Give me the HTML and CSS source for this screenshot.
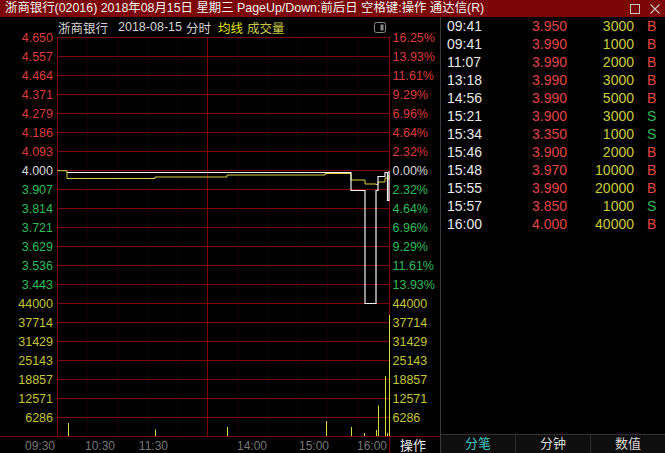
FILE: index.html
```html
<!DOCTYPE html>
<html lang="zh-CN">
<head>
<meta charset="utf-8">
<title>浙商银行 分时</title>
<link rel="stylesheet" href="styles.css">
</head>
<body>
<div class="titlebar">
  <span class="title">浙商银行(02016) 2018年08月15日 星期三 PageUp/Down:前后日 空格键:操作 通达信(R)</span>
  <div class="winbtns">
    <svg class="winbtn" width="12" height="12" viewBox="0 0 12 12"><rect x="1.5" y="1.5" width="9" height="9" fill="none" stroke="#c8c8c8" stroke-width="1"/></svg>
    <svg class="winbtn" width="12" height="12" viewBox="0 0 12 12"><path d="M1.5 1.5 L10.5 10.5 M10.5 1.5 L1.5 10.5" stroke="#c8c8c8" stroke-width="1.1"/></svg>
  </div>
</div>
<div class="main">
  <div class="chartpane">
    <div class="chart-head">
      <span class="h-name">浙商银行</span>
      <span class="h-date">2018-08-15</span>
      <span class="h-mode">分时</span>
      <span class="h-avg">均线</span>
      <span class="h-vol">成交量</span>
      <svg class="h-icon" width="12" height="11" viewBox="0 0 12 11"><rect x="0.5" y="0.5" width="11" height="10" rx="2" fill="none" stroke="#8a8a8a"/><rect x="6.5" y="2.5" width="3" height="6" fill="#8a8a8a"/></svg>
    </div>
    <svg class="chart" width="440" height="416" viewBox="0 37 440 416">
      <g class="grid">
        <line x1="57" y1="37.5" x2="390" y2="37.5"/>
        <line x1="57" y1="56.5" x2="390" y2="56.5"/>
        <line x1="57" y1="75.5" x2="390" y2="75.5"/>
        <line x1="57" y1="94.5" x2="390" y2="94.5"/>
        <line x1="57" y1="113.5" x2="390" y2="113.5"/>
        <line x1="57" y1="132.5" x2="390" y2="132.5"/>
        <line x1="57" y1="151.5" x2="390" y2="151.5"/>
        <line x1="57" y1="170.5" x2="390" y2="170.5"/>
        <line x1="57" y1="189.5" x2="390" y2="189.5"/>
        <line x1="57" y1="208.5" x2="390" y2="208.5"/>
        <line x1="57" y1="227.5" x2="390" y2="227.5"/>
        <line x1="57" y1="246.5" x2="390" y2="246.5"/>
        <line x1="57" y1="265.5" x2="390" y2="265.5"/>
        <line x1="57" y1="284.5" x2="390" y2="284.5"/>
        <line x1="57" y1="303.5" x2="390" y2="303.5"/>
        <line x1="57" y1="322.5" x2="390" y2="322.5"/>
        <line x1="57" y1="341.5" x2="390" y2="341.5"/>
        <line x1="57" y1="360.5" x2="390" y2="360.5"/>
        <line x1="57" y1="379.5" x2="390" y2="379.5"/>
        <line x1="57" y1="398.5" x2="390" y2="398.5"/>
        <line x1="57" y1="417.5" x2="390" y2="417.5"/>
        <line x1="0" y1="436.5" x2="440" y2="436.5"/>
        <line x1="57.5" y1="37" x2="57.5" y2="437"/>
        <line x1="207.5" y1="37" x2="207.5" y2="437"/>
        <line x1="389.5" y1="37" x2="389.5" y2="453"/>
      </g>
      <g class="dots">
        <line x1="87.5" y1="38" x2="87.5" y2="436"/>
        <line x1="117.5" y1="38" x2="117.5" y2="436"/>
        <line x1="147.5" y1="38" x2="147.5" y2="436"/>
        <line x1="177.5" y1="38" x2="177.5" y2="436"/>
        <line x1="237.5" y1="38" x2="237.5" y2="436"/>
        <line x1="267.5" y1="38" x2="267.5" y2="436"/>
        <line x1="297.5" y1="38" x2="297.5" y2="436"/>
        <line x1="327.5" y1="38" x2="327.5" y2="436"/>
        <line x1="357.5" y1="38" x2="357.5" y2="436"/>
      </g>
      <g class="lab-l">
        <text class="up" x="53" y="37.5">4.650</text>
        <text class="up" x="53" y="56.5">4.557</text>
        <text class="up" x="53" y="75.5">4.464</text>
        <text class="up" x="53" y="94.5">4.371</text>
        <text class="up" x="53" y="113.5">4.279</text>
        <text class="up" x="53" y="132.5">4.186</text>
        <text class="up" x="53" y="151.5">4.093</text>
        <text class="flat" x="53" y="170.5">4.000</text>
        <text class="dn" x="53" y="189.5">3.907</text>
        <text class="dn" x="53" y="208.5">3.814</text>
        <text class="dn" x="53" y="227.5">3.721</text>
        <text class="dn" x="53" y="246.5">3.629</text>
        <text class="dn" x="53" y="265.5">3.536</text>
        <text class="dn" x="53" y="284.5">3.443</text>
        <text class="vl" x="53" y="303.5">44000</text>
        <text class="vl" x="53" y="322.5">37714</text>
        <text class="vl" x="53" y="341.5">31429</text>
        <text class="vl" x="53" y="360.5">25143</text>
        <text class="vl" x="53" y="379.5">18857</text>
        <text class="vl" x="53" y="398.5">12571</text>
        <text class="vl" x="53" y="417.5">6286</text>
      </g>
      <g class="lab-r">
        <text class="up" x="392.5" y="37.5">16.25%</text>
        <text class="up" x="392.5" y="56.5">13.93%</text>
        <text class="up" x="392.5" y="75.5">11.61%</text>
        <text class="up" x="392.5" y="94.5">9.29%</text>
        <text class="up" x="392.5" y="113.5">6.96%</text>
        <text class="up" x="392.5" y="132.5">4.64%</text>
        <text class="up" x="392.5" y="151.5">2.32%</text>
        <text class="flat" x="392.5" y="170.5">0.00%</text>
        <text class="dn" x="392.5" y="189.5">2.32%</text>
        <text class="dn" x="392.5" y="208.5">4.64%</text>
        <text class="dn" x="392.5" y="227.5">6.96%</text>
        <text class="dn" x="392.5" y="246.5">9.29%</text>
        <text class="dn" x="392.5" y="265.5">11.61%</text>
        <text class="dn" x="392.5" y="284.5">13.93%</text>
        <text class="vl" x="392.5" y="303.5">44000</text>
        <text class="vl" x="392.5" y="322.5">37714</text>
        <text class="vl" x="392.5" y="341.5">31429</text>
        <text class="vl" x="392.5" y="360.5">25143</text>
        <text class="vl" x="392.5" y="379.5">18857</text>
        <text class="vl" x="392.5" y="398.5">12571</text>
        <text class="vl" x="392.5" y="417.5">6286</text>
      </g>
      <polyline class="avg" points="57,170.7 67,170.7 67,178.5 155,178.5 155,177 227,177 227,175 325,175 325,173.5 351,173.5 351,180 365,180 365,184 376,184 376,184.5 378,184.5 378,182 385,182 385,178 387.5,178 387.5,179 389,179 389,175"/>
      <polyline class="price" points="67,172.5 351,172.5 351,190.5 365,190.5 365,303.5 376,303.5 376,190.5 378,190.5 378,176.5 385,176.5 385,172.5 387.5,172.5 387.5,200.5 389,200.5 389,171"/>
      <g class="bars">
        <line x1="68.5" y1="436" x2="68.5" y2="423"/>
        <line x1="155.5" y1="436" x2="155.5" y2="429.5"/>
        <line x1="227.5" y1="436" x2="227.5" y2="427"/>
        <line x1="326.5" y1="436" x2="326.5" y2="421"/>
        <line x1="351.5" y1="436" x2="351.5" y2="427"/>
        <line x1="364.5" y1="436" x2="364.5" y2="433"/>
        <line x1="376.5" y1="436" x2="376.5" y2="430"/>
        <line x1="378.5" y1="436" x2="378.5" y2="405.5"/>
        <line x1="385.5" y1="436" x2="385.5" y2="376"/>
        <line x1="387.5" y1="436" x2="387.5" y2="433"/>
        <line x1="389.5" y1="436" x2="389.5" y2="315"/>
      </g>
      <g class="times">
        <text x="55" y="445.5">09:30</text>
        <text x="115" y="445.5">10:30</text>
        <text x="168" y="445.5">11:30</text>
        <text x="267" y="445.5">14:00</text>
        <text x="329" y="445.5">15:00</text>
        <text x="387" y="445.5">16:00</text>
      </g>
      <text class="op" x="400" y="445.5">操作</text>
    </svg>
  </div>
  <div class="ticks">
    <div class="tick-list">
      <div class="row"><span class="t">09:41</span><span class="p">3.950</span><span class="v">3000</span><span class="f b">B</span></div>
      <div class="row"><span class="t">09:41</span><span class="p">3.990</span><span class="v">1000</span><span class="f b">B</span></div>
      <div class="row"><span class="t">11:07</span><span class="p">3.990</span><span class="v">2000</span><span class="f b">B</span></div>
      <div class="row"><span class="t">13:18</span><span class="p">3.990</span><span class="v">3000</span><span class="f b">B</span></div>
      <div class="row"><span class="t">14:56</span><span class="p">3.990</span><span class="v">5000</span><span class="f b">B</span></div>
      <div class="row"><span class="t">15:21</span><span class="p">3.900</span><span class="v">3000</span><span class="f s">S</span></div>
      <div class="row"><span class="t">15:34</span><span class="p">3.350</span><span class="v">1000</span><span class="f s">S</span></div>
      <div class="row"><span class="t">15:46</span><span class="p">3.900</span><span class="v">2000</span><span class="f b">B</span></div>
      <div class="row"><span class="t">15:48</span><span class="p">3.970</span><span class="v">10000</span><span class="f b">B</span></div>
      <div class="row"><span class="t">15:55</span><span class="p">3.990</span><span class="v">20000</span><span class="f b">B</span></div>
      <div class="row"><span class="t">15:57</span><span class="p">3.850</span><span class="v">1000</span><span class="f s">S</span></div>
      <div class="row"><span class="t">16:00</span><span class="p">4.000</span><span class="v">40000</span><span class="f b">B</span></div>
    </div>
    <div class="tabs">
      <div class="tab active">分笔</div>
      <div class="tab">分钟</div>
      <div class="tab">数值</div>
    </div>
  </div>
</div>
</body>
</html>
```
FILE: styles.css
```css
* { box-sizing: border-box; }
html, body { margin: 0; padding: 0; }
body {
  width: 665px;
  height: 453px;
  overflow: hidden;
  background: #000;
  font-family: "Liberation Sans", "Noto Sans CJK SC", sans-serif;
  color: #e0e0e0;
}
.titlebar {
  height: 17px;
  background: #7c0606;
  display: flex;
  align-items: center;
  padding-left: 5px;
  padding-right: 4px;
}
.title {
  font-size: 12.4px;
  color: #f2f2f2;
  white-space: nowrap;
  line-height: 17px;
}
.winbtns {
  margin-left: auto;
  display: flex;
  gap: 8px;
  align-items: center;
}
.winbtn { display: block; }
.main {
  display: flex;
  height: 436px;
}
.chartpane {
  width: 440px;
  flex: none;
  display: flex;
  flex-direction: column;
}
.chart-head {
  height: 20px;
  display: flex;
  align-items: center;
  padding-left: 58px;
  font-size: 12.5px;
  white-space: nowrap;
}
.h-name { color: #d4d4d4; }
.h-date { color: #d4d4d4; margin-left: 10px; }
.h-mode { color: #d4d4d4; margin-left: 4px; }
.h-avg { color: #e4e400; margin-left: 7px; }
.h-vol { color: #c8c84c; margin-left: 4px; }
.h-icon { margin-left: auto; margin-right: 54px; display: block; }
.chart {
  display: block;
  overflow: visible;
  font-family: "Liberation Sans", "Noto Sans CJK SC", sans-serif;
}
.grid line { stroke: #800606; stroke-width: 1; }
.dots line { stroke: #4a0606; stroke-width: 1; stroke-dasharray: 1 3; }
.lab-l text { font-size: 12.5px; text-anchor: end; dominant-baseline: central; }
.lab-r text { font-size: 12.5px; text-anchor: start; dominant-baseline: central; }
.up { fill: #dc3c3c; }
.flat { fill: #d8d8d8; }
.dn { fill: #2ebc5a; }
.vl { fill: #c4c43c; }
.avg { fill: none; stroke: #d8d040; stroke-width: 1; }
.price { fill: none; stroke: #f0f0f0; stroke-width: 1.2; }
.bars line { stroke: #d8d840; stroke-width: 1; }
.times text { font-size: 12px; fill: #767676; text-anchor: end; dominant-baseline: central; }
.op { font-size: 13px; fill: #ececec; dominant-baseline: central; }
.ticks {
  flex: 1;
  border-left: 1px solid #3a3a3a;
  display: flex;
  flex-direction: column;
}
.tick-list { flex: 1; }
.row {
  height: 18px;
  display: grid;
  grid-template-columns: 63px 57px 67px 1fr;
  padding-left: 6px;
  font-size: 14px;
  line-height: 18px;
}
.t { color: #e8e8e8; }
.p { color: #e04646; text-align: right; }
.v { color: #cccc3a; text-align: right; }
.f { padding-left: 13px; }
.b { color: #e04646; }
.s { color: #2ebc5a; }
.tabs {
  height: 19px;
  border-top: 1px solid #333;
  background: #0e0e0e;
  display: flex;
}
.tab {
  flex: 1;
  text-align: center;
  font-size: 13px;
  line-height: 18px;
  color: #d8d8d8;
  border-left: 1px solid #2c2c2c;
}
.tab:first-child { border-left: none; }
.tab.active { color: #40c4c4; }
```
